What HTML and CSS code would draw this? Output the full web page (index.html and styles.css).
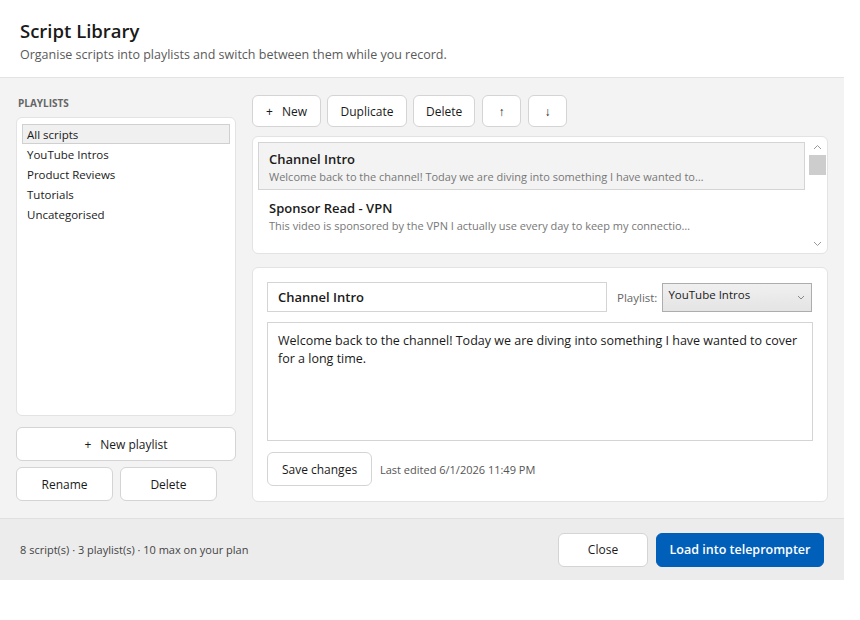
FILE: index.html
```html
<!DOCTYPE html>
<html lang="en">
<head>
  <meta charset="UTF-8">
  <meta name="viewport" content="width=device-width, initial-scale=1.0">
  <title>Script Library</title>
  <link rel="stylesheet" href="styles.css">
</head>
<body>
  <div class="dialog">
    <!-- Header -->
    <div class="dialog-header">
      <h1>Script Library</h1>
      <p>Organise scripts into playlists and switch between them while you record.</p>
    </div>

    <div class="dialog-body">
      <!-- Left: Playlists -->
      <div class="sidebar">
        <div class="section-label">PLAYLISTS</div>
        <ul class="playlist-list">
          <li class="selected">All scripts</li>
          <li>YouTube Intros</li>
          <li>Product Reviews</li>
          <li>Tutorials</li>
          <li>Uncategorised</li>
        </ul>
        <button class="btn btn-wide"><span class="plus">+</span>New playlist</button>
        <div class="btn-row">
          <button class="btn btn-half">Rename</button>
          <button class="btn btn-half">Delete</button>
        </div>
      </div>

      <!-- Right: Scripts -->
      <div class="main">
        <div class="toolbar">
          <button class="btn btn-new"><span class="plus">+</span>New</button>
          <button class="btn btn-dup">Duplicate</button>
          <button class="btn btn-del">Delete</button>
          <button class="btn btn-icon">&#8593;</button>
          <button class="btn btn-icon">&#8595;</button>
        </div>

        <div class="script-list">
          <div class="script-items">
            <div class="script-item selected">
              <div class="script-title">Channel Intro</div>
              <div class="script-preview">Welcome back to the channel! Today we are diving into something I have wanted to…</div>
            </div>
            <div class="script-item">
              <div class="script-title">Sponsor Read - VPN</div>
              <div class="script-preview">This video is sponsored by the VPN I actually use every day to keep my connectio…</div>
            </div>
          </div>
          <div class="scrollbar">
            <div class="scroll-arrow">
              <svg width="9" height="6" viewBox="0 0 9 6"><path d="M1 5 L4.5 1.5 L8 5" fill="none" stroke="#999" stroke-width="1"/></svg>
            </div>
            <div class="scroll-thumb"></div>
            <div class="scroll-track"></div>
            <div class="scroll-arrow">
              <svg width="9" height="6" viewBox="0 0 9 6"><path d="M1 1 L4.5 4.5 L8 1" fill="none" stroke="#999" stroke-width="1"/></svg>
            </div>
          </div>
        </div>

        <div class="editor">
          <div class="editor-top">
            <input class="title-input" type="text" value="Channel Intro">
            <span class="field-label">Playlist:</span>
            <div class="select">
              <span>YouTube Intros</span>
              <svg width="8" height="5" viewBox="0 0 8 5"><path d="M1 1 L4 4 L7 1" fill="none" stroke="#888" stroke-width="1"/></svg>
            </div>
          </div>
          <textarea class="body-input">Welcome back to the channel! Today we are diving into something I have wanted to cover for a long time.</textarea>
          <div class="editor-footer">
            <button class="btn btn-save">Save changes</button>
            <span class="last-edited">Last edited 6/1/2026 11:49 PM</span>
          </div>
        </div>
      </div>
    </div>

    <!-- Footer -->
    <div class="dialog-footer">
      <span class="summary">8 script(s) · 3 playlist(s) · 10 max on your plan</span>
      <div class="footer-actions">
        <button class="btn btn-close">Close</button>
        <button class="btn btn-primary">Load into teleprompter</button>
      </div>
    </div>
  </div>
</body>
</html>
```

FILE: styles.css
```css
body {
  margin: 0;
  background: #ffffff;
  font-family: "Open Sans", "Noto Sans", sans-serif;
  color: #1a1a1a;
}

.dialog {
  width: 844px;
  height: 580px;
  display: flex;
  flex-direction: column;
}

/* Header */
.dialog-header {
  height: 78px;
  box-sizing: border-box;
  padding: 19px 20px 0;
  border-bottom: 1px solid #e3e3e3;
  background: #fff;
}

.dialog-header h1 {
  margin: 0;
  font-size: 18.5px;
  font-weight: 600;
  line-height: 24px;
}

.dialog-header p {
  margin: 4px 0 0;
  font-size: 12.5px;
  color: #5a5a5a;
  line-height: 16px;
}

/* Body */
.dialog-body {
  flex: 1;
  display: flex;
  gap: 16px;
  padding: 17px 16px 16px;
  background: #f3f3f3;
}

.btn {
  font-family: inherit;
  font-size: 12px;
  color: #1a1a1a;
  background: #fff;
  border: 1px solid #d4d4d4;
  border-radius: 6px;
  height: 34px;
  padding: 0 12px;
  cursor: pointer;
}

.plus {
  margin-right: 9px;
}

/* Sidebar */
.sidebar {
  width: 220px;
  display: flex;
  flex-direction: column;
}

.section-label {
  font-size: 10px;
  font-weight: 700;
  color: #666;
  line-height: 14px;
  padding: 1px 0 0 2px;
  height: 22px;
  box-sizing: border-box;
}

.playlist-list {
  list-style: none;
  margin: 0;
  padding: 6px 5px 5px;
  height: 299px;
  box-sizing: border-box;
  background: #fff;
  border: 1px solid #e3e3e3;
  border-radius: 6px;
}

.playlist-list li {
  font-size: 11.5px;
  line-height: 18px;
  padding: 1px 4px 0;
  height: 20px;
  box-sizing: border-box;
  border: 1px solid transparent;
}

.playlist-list li.selected {
  background: #f0f0f0;
  border-color: #d0d0d0;
}

.btn-wide {
  width: 100%;
  margin-top: 11px;
}

.btn-row {
  display: flex;
  gap: 7px;
  margin-top: 6px;
}

.btn-half {
  width: 97px;
}

/* Main */
.main {
  flex: 1;
  display: flex;
  flex-direction: column;
}

.toolbar {
  display: flex;
  gap: 6px;
}

.toolbar .btn {
  height: 32px;
}

.btn-new {
  width: 69px;
}

.btn-dup {
  width: 80px;
}

.btn-del {
  width: 62px;
}

.btn-icon {
  width: 39px;
  margin-left: 1px;
  padding: 0;
}

.script-list {
  margin-top: 9px;
  height: 118px;
  box-sizing: border-box;
  background: #fff;
  border: 1px solid #e3e3e3;
  border-radius: 6px;
  display: flex;
  padding: 5px 1px 1px 5px;
  overflow: hidden;
}

.script-items {
  flex: 1;
}

.script-item {
  height: 48px;
  box-sizing: border-box;
  padding: 7px 10px 0;
  border: 1px solid transparent;
  margin-bottom: 1px;
}

.script-item.selected {
  background: #f3f3f3;
  border-color: #d4d4d4;
}

.script-title {
  font-size: 13px;
  font-weight: 600;
  line-height: 19px;
}

.script-preview {
  font-size: 11px;
  color: #777;
  line-height: 15px;
  white-space: nowrap;
}

.scrollbar {
  width: 17px;
  margin-left: 4px;
  margin-top: -4px;
  display: flex;
  flex-direction: column;
}

.scroll-arrow {
  height: 17px;
  display: flex;
  align-items: center;
  justify-content: center;
}

.scroll-thumb {
  height: 20px;
  background: #cdcdcd;
}

.scroll-track {
  flex: 1;
}

/* Editor */
.editor {
  margin-top: 13px;
  flex: 1;
  box-sizing: border-box;
  background: #fff;
  border: 1px solid #e3e3e3;
  border-radius: 6px;
  padding: 14px 14px 13px;
  display: flex;
  flex-direction: column;
}

.editor-top {
  display: flex;
  align-items: center;
}

.title-input {
  width: 340px;
  height: 30px;
  box-sizing: border-box;
  border: 1px solid #d4d4d4;
  padding: 0 10px;
  font-family: inherit;
  font-size: 13px;
  font-weight: 600;
  color: #1a1a1a;
  outline: none;
}

.field-label {
  margin-left: 10px;
  font-size: 11.5px;
  color: #666;
}

.select {
  margin-left: 5px;
  width: 150px;
  height: 29px;
  box-sizing: border-box;
  border: 1px solid #adadad;
  background: linear-gradient(#f0f0f0, #e4e4e4);
  display: flex;
  justify-content: space-between;
  padding: 3px 6px 0 5px;
  font-size: 11.5px;
}

.select svg {
  margin-top: 8px;
}

.body-input {
  margin-top: 10px;
  height: 119px;
  box-sizing: border-box;
  border: 1px solid #d4d4d4;
  padding: 9px 10px;
  font-family: inherit;
  font-size: 12.5px;
  line-height: 18px;
  color: #1a1a1a;
  resize: none;
  outline: none;
}

.editor-footer {
  margin-top: 11px;
  display: flex;
  align-items: center;
  gap: 8px;
}

.btn-save {
  width: 105px;
}

.last-edited {
  font-size: 11px;
  color: #555;
}

/* Footer */
.dialog-footer {
  height: 62px;
  box-sizing: border-box;
  background: #ececec;
  border-top: 1px solid #e0e0e0;
  display: flex;
  align-items: center;
  justify-content: space-between;
  padding: 0 20px;
}

.summary {
  font-size: 11px;
  color: #444;
}

.footer-actions {
  display: flex;
  gap: 8px;
}

.btn-close {
  width: 90px;
}

.btn-primary {
  background: #0060b9;
  border-color: #0060b9;
  color: #fff;
  font-weight: 600;
  font-size: 12.5px;
  width: 168px;
}
```
